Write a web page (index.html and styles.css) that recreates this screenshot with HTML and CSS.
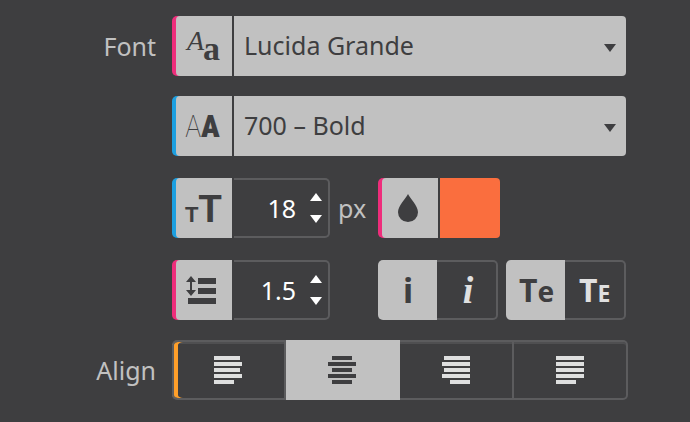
FILE: index.html
```html
<!DOCTYPE html>
<html lang="en">
<head>
<meta charset="utf-8">
<meta name="viewport" content="width=device-width, initial-scale=1">
<title>Typography</title>
<link rel="stylesheet" href="styles.css">
</head>
<body>
<form class="panel">
  <div class="row">
    <label class="label" for="family">Font</label>
    <div class="field pink">
      <span class="icon"><svg width="52" height="60" aria-hidden="true"><text class="script" x="11" y="34">A</text><text class="fat" x="27" y="44">a</text></svg></span>
      <div class="select">
        <select id="family"><option>Lucida Grande</option></select>
        <svg class="caret" width="12" height="8" aria-hidden="true"><path d="M0 0h12L6 8z"/></svg>
      </div>
    </div>
  </div>
  <div class="row">
    <div class="field blue second">
      <span class="icon"><svg width="52" height="60" aria-hidden="true"><text class="thin" x="9" y="41">A</text><text class="heavy" x="25" y="41">A</text></svg></span>
      <div class="select">
        <select aria-label="Font weight"><option>700 – Bold</option></select>
        <svg class="caret" width="12" height="8" aria-hidden="true"><path d="M0 0h12L6 8z"/></svg>
      </div>
    </div>
  </div>
  <div class="details">
    <div class="row">
      <div class="cells second">
        <div class="field blue">
          <span class="icon"><svg width="52" height="60" aria-hidden="true"><text class="small-t" x="9" y="44">T<tspan class="big-t">T</tspan></text></svg></span>
          <div class="number">
            <input id="size" type="text" inputmode="decimal" value="18" aria-label="Font size">
            <span class="steps">
              <button type="button" aria-label="Increase size"><svg width="12" height="8"><path d="M6 0l6 8H0z"/></svg></button>
              <button type="button" aria-label="Decrease size"><svg width="12" height="8"><path d="M0 0h12L6 8z"/></svg></button>
            </span>
          </div>
        </div>
        <label class="unit" for="size">px</label>
        <div class="field pink colour">
          <span class="icon"><svg width="20" height="28" viewBox="0 0 20 28" aria-hidden="true"><path d="M10 0C12 4 20 12 20 18.200A10 9.800 0 0 1 0 18.200C0 12 8 4 10 0z"/></svg></span>
          <input class="swatch" type="color" value="#fa6e3e" aria-label="Text colour">
        </div>
      </div>
    </div>
    <div class="row">
      <div class="cells second">
        <div class="field pink">
          <span class="icon"><svg width="32" height="28" viewBox="0 0 32 28" aria-hidden="true"><path d="M12 2h18v6H12zM12 12h18v6H12zM2 22h28v6H2zM5 0l5 6H6v8h4l-5 6-5-6h4V6H0z"/></svg></span>
          <div class="number">
            <input type="text" inputmode="decimal" value="1.5" aria-label="Line height">
            <span class="steps">
              <button type="button" aria-label="Increase line height"><svg width="12" height="8"><path d="M6 0l6 8H0z"/></svg></button>
              <button type="button" aria-label="Decrease line height"><svg width="12" height="8"><path d="M0 0h12L6 8z"/></svg></button>
            </span>
          </div>
        </div>
        <span></span>
        <div class="toggles">
          <div class="toggle">
            <button type="button" class="on" aria-label="Normal" aria-pressed="true"><svg width="60" height="60"><text class="roman" x="30" y="43">i</text></svg></button>
            <button type="button" aria-label="Italic" aria-pressed="false"><svg width="60" height="60"><text class="italic" x="31" y="43">i</text></svg></button>
          </div>
          <div class="toggle">
            <button type="button" class="on" aria-label="Normal case" aria-pressed="true"><svg width="60" height="60"><text class="caps" x="13" y="42">T<tspan class="lower">e</tspan></text></svg></button>
            <button type="button" aria-label="Small caps" aria-pressed="false"><svg width="60" height="60"><text class="caps" x="14" y="42">T<tspan class="small-e">E</tspan></text></svg></button>
          </div>
        </div>
      </div>
    </div>
  </div>
  <div class="row">
    <span class="label" id="align-label">Align</span>
    <div class="align" role="group" aria-labelledby="align-label">
      <button type="button" aria-label="Left"><svg width="28" height="28"><path d="M0 0h26v4H0zM0 6h28v4H0zM0 12h26v4H0zM0 18h28v4H0zM0 24h20v4H0z"/></svg></button>
      <button type="button" aria-label="Center" class="on"><svg width="28" height="28"><path d="M4 0h20v4H4zM0 6h28v4H0zM4 12h20v4H4zM0 18h28v4H0zM4 24h20v4H4z"/></svg></button>
      <button type="button" aria-label="Right"><svg width="28" height="28"><path d="M2 0h26v4H2zM0 6h28v4H0zM2 12h26v4H2zM0 18h28v4H0zM8 24h20v4H8z"/></svg></button>
      <button type="button" aria-label="Justify"><svg width="28" height="28"><path d="M0 0h28v4H0zM0 6h28v4H0zM0 12h28v4H0zM0 18h28v4H0zM0 24h20v4H0z"/></svg></button>
    </div>
  </div>
</form>
</body>
</html>
```
FILE: styles.css
```css
:root {
  --dark: #3e3e40;
  --light: #c1c1c1;
  --line: #5c5c5e;
}
* { box-sizing: border-box; }
body {
  margin: 0;
  background: var(--dark);
  color: var(--light);
  font-family: "Noto Sans", "Open Sans", sans-serif;
  font-size: 25px;
  line-height: 32px;
}
button, input, select {
  font: inherit;
  color: inherit;
  margin: 0;
  padding: 0;
  border: 0;
  background: none;
  appearance: none;
}
svg { display: block; fill: currentColor; }
.panel {
  display: flex;
  flex-direction: column;
  gap: 20px;
  padding: 16px 64px 16px 8px;
}
.row {
  display: grid;
  grid-template-columns: 148px minmax(0, 1fr);
  column-gap: 16px;
  align-items: center;
}
.second { grid-column: 2; }
.label { text-align: right; }
.details {
  display: flex;
  flex-direction: column;
  gap: 22px;
  padding-top: 2px;
}

/* Fields with a coloured edge */
.field {
  display: flex;
  gap: 2px;
  height: 60px;
  padding-left: 4px;
  border-radius: 5px;
  background: linear-gradient(to right, var(--edge) 8px, transparent 8px);
}
.pink { --edge: #ee2d7b; }
.blue { --edge: #1c9fe0; }
.icon {
  flex: 0 0 56px;
  display: flex;
  align-items: center;
  justify-content: center;
  padding-right: 4px;
  border-radius: 4px 0 0 4px;
  background: var(--light);
  color: var(--dark);
}
.select {
  position: relative;
  flex: 1;
  min-width: 0;
  color: var(--dark);
}
.select select {
  width: 100%;
  height: 60px;
  padding: 0 40px 2px 10px;
  border-radius: 0 4px 4px 0;
  background: var(--light);
}
.caret {
  position: absolute;
  right: 10px;
  top: 28px;
  pointer-events: none;
}
.number {
  flex: 1;
  display: flex;
  align-items: center;
  gap: 14px;
  min-width: 0;
  padding-right: 6px;
  border: 2px solid var(--line);
  border-left: 0;
  border-radius: 0 5px 5px 0;
  color: #fff;
}
.number input {
  flex: 1;
  width: 0;
  text-align: right;
}
.steps {
  display: flex;
  flex-direction: column;
  gap: 14px;
}
.steps button { display: block; }
.cells {
  display: grid;
  grid-template-columns: 158px 48px minmax(0, 1fr);
  align-items: center;
}
.unit { padding-left: 8px; }
.colour { width: 122px; }
.swatch {
  flex: 1;
  width: 0;
  height: 60px;
  border-radius: 0 4px 4px 0;
  overflow: hidden;
}
.swatch::-webkit-color-swatch-wrapper { padding: 0; }
.swatch::-webkit-color-swatch { border: 0; }

/* Paired toggles */
.toggles { display: flex; gap: 8px; }
.toggle {
  flex: 1;
  min-width: 0;
  display: flex;
  height: 60px;
}
.toggle button {
  flex: 1 1 0;
  width: 50%;
  min-width: 0;
  display: flex;
  align-items: center;
  justify-content: center;
  border: 2px solid var(--line);
  border-left: 0;
  border-radius: 0 5px 5px 0;
  color: #e0e0e0;
}
.toggle svg { flex: none; }
.toggle .on {
  border: 0;
  border-radius: 5px 0 0 5px;
  background: var(--light);
  color: var(--dark);
}

/* Alignment */
.align {
  display: grid;
  grid-template-columns: repeat(4, 1fr);
  height: 60px;
  margin-right: -2px;
}
.align button {
  display: flex;
  align-items: center;
  justify-content: center;
  border: solid var(--line);
  border-width: 2px 2px 2px 0;
  box-shadow: inset 0 2px #4f4f51;
  color: #dedfdf;
}
.align button:first-child {
  border-radius: 5px 0 0 5px;
  box-shadow: inset 2px 0 var(--line), inset 6px 0 #ff9f2a, inset 0 2px #4f4f51;
}
.align button:last-child { border-radius: 0 5px 5px 0; }
.align .on {
  border-color: var(--light);
  box-shadow: none;
  background: var(--light);
  color: var(--dark);
}

/* Letter icons */
.script { font: italic 28px "Liberation Serif", serif; }
.fat { font: bold 34px "Liberation Serif", serif; }
.thin { font: 100 31px "Roboto Condensed", Roboto, sans-serif; }
.heavy { font: 900 31px "Roboto Condensed", Roboto, sans-serif; }
.small-t { font: bold 22px "Liberation Sans", sans-serif; }
.big-t { font-size: 38px; }
.roman { font: bold 34px "Noto Sans", sans-serif; text-anchor: middle; }
.italic { font: italic bold 38px "Liberation Serif", serif; text-anchor: middle; }
.caps { font: bold 32px "Noto Sans", sans-serif; }
.lower { font-size: 28px; }
.small-e { font-size: 23px; }
```
